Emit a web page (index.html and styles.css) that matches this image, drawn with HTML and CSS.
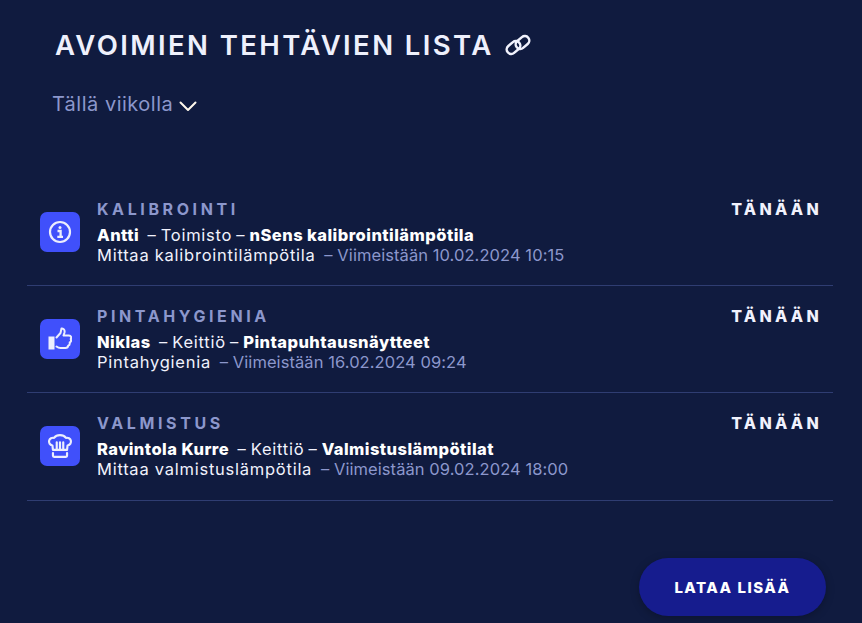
FILE: index.html
```html
<!DOCTYPE html>
<html lang="fi">
<head>
    <meta charset="UTF-8">
    <meta name="viewport" content="width=device-width, initial-scale=1.0">
    <title>Avoimien tehtävien lista</title>
    <link rel="stylesheet" href="styles.css">
</head>
<body>
    <h1 class="title">
        AVOIMIEN TEHTÄVIEN LISTA
        <svg class="link-icon" viewBox="0 0 28 22" width="28" height="22" fill="none" stroke="currentColor" stroke-width="2.5">
            <rect x="2" y="9" width="15" height="9" rx="4.5" transform="rotate(-40 9.500 13.500)"/>
            <rect x="11" y="4" width="15" height="9" rx="4.5" transform="rotate(-40 18.500 8.500)"/>
        </svg>
    </h1>

    <div class="filter">
        Tällä viikolla
        <svg class="chevron" viewBox="0 0 18 11" width="18" height="11" fill="none" stroke="currentColor" stroke-width="2" stroke-linecap="round" stroke-linejoin="round">
            <path d="M1.5 1.5 L9 9 L16.5 1.5"/>
        </svg>
    </div>

    <ul class="tasks">
        <li class="task">
            <div class="task-icon">
                <svg viewBox="0 0 24 24" width="24" height="24" fill="none" stroke="currentColor" stroke-width="2.2">
                    <circle cx="12" cy="12" r="10"/>
                    <circle cx="12" cy="7.6" r="1.5" fill="currentColor" stroke="none"/>
                    <path d="M9.5 11 H12.6 V16.4 M9.3 16.8 H15" stroke-width="2.3"/>
                </svg>
            </div>
            <div class="task-body">
                <div class="task-type">KALIBROINTI</div>
                <div class="task-line task-head"><b>Antti</b>&nbsp; – Toimisto – <b>nSens kalibrointilämpötila</b></div>
                <div class="task-line">Mittaa kalibrointilämpötila &nbsp;<span class="due">– Viimeistään 10.02.2024 10:15</span></div>
            </div>
            <div class="task-when">TÄNÄÄN</div>
        </li>
        <li class="task">
            <div class="task-icon">
                <svg viewBox="0 0 24 24" width="24" height="24" fill="none" stroke="currentColor" stroke-width="2" stroke-linejoin="round" stroke-linecap="round">
                    <rect x="0.500" y="9.500" width="6" height="13" fill="currentColor" stroke="none"/>
                    <path d="M8.500 10.500 L12.500 6 L13.500 1.500 C15.800 1 17 3.500 16.500 5.500 L15.500 8.500 H21 C23 8.500 23.700 10.500 22.700 12 C23.400 13.500 22.700 15 21.700 15.500 C22 17 21.200 18.300 20.200 18.700 C20 20.200 19 21 17.500 21 H12.500 C10.500 21 9.500 20.300 8.500 19.500"/>
                </svg>
            </div>
            <div class="task-body">
                <div class="task-type">PINTAHYGIENIA</div>
                <div class="task-line task-head"><b>Niklas</b>&nbsp; – Keittiö – <b>Pintapuhtausnäytteet</b></div>
                <div class="task-line">Pintahygienia &nbsp;<span class="due">– Viimeistään 16.02.2024 09:24</span></div>
            </div>
            <div class="task-when">TÄNÄÄN</div>
        </li>
        <li class="task">
            <div class="task-icon">
                <svg viewBox="0 0 24 24" width="26" height="26" fill="none" stroke="currentColor" stroke-width="2" stroke-linejoin="round" stroke-linecap="round">
                    <path d="M5.500 15.500 L5 11.500 C2.500 11 1.500 9 2 7 C2.500 5 4.500 4 6.500 4.500 C8 2.500 10 2 12 2 C14 2 16 2.500 17.500 4.500 C19.500 4 21.500 5 22 7 C22.500 9 21.500 11 19 11.500 L18.500 15.500 Z"/>
                    <path d="M9 8.500 V15 M12 8.500 V15 M15 8.500 V15"/>
                    <path d="M5.500 18.500 V21 C5.500 21.600 6 22 6.500 22 H17.500 C18 22 18.500 21.600 18.500 21 V18.500"/>
                </svg>
            </div>
            <div class="task-body">
                <div class="task-type">VALMISTUS</div>
                <div class="task-line task-head"><b>Ravintola Kurre</b>&nbsp; – Keittiö – <b>Valmistuslämpötilat</b></div>
                <div class="task-line">Mittaa valmistuslämpötila &nbsp;<span class="due">– Viimeistään 09.02.2024 18:00</span></div>
            </div>
            <div class="task-when">TÄNÄÄN</div>
        </li>
    </ul>

    <div class="actions">
        <button class="load-more">LATAA LISÄÄ</button>
    </div>
</body>
</html>
```

FILE: styles.css
```css
body {
    margin: 0;
    height: 623px;
    overflow: hidden;
    background-color: #101b3f;
    color: #f1f2fd;
    font-family: Inter, "Open Sans", sans-serif;
}
.title {
    display: flex;
    align-items: center;
    gap: 10px;
    margin: 0;
    padding: 28px 0 0 55px;
    font-size: 27.5px;
    line-height: 34px;
    font-weight: 600;
    letter-spacing: 2.4px;
    color: #eef0fc;
}
.link-icon {
    color: #f1f2fd;
}
.filter {
    display: flex;
    align-items: center;
    gap: 6px;
    padding: 29px 0 0 52px;
    font-size: 20px;
    line-height: 26px;
    letter-spacing: 0.5px;
    color: #8c97cc;
}
.chevron {
    margin-top: 5px;
    color: #fff8ec;
}
.tasks {
    list-style: none;
    margin: 62px 29px 0 27px;
    padding: 0;
}
.task {
    display: flex;
    height: 106px;
    border-bottom: 1px solid #2f3d72;
    padding-left: 13px;
    padding-right: 11px;
}
.task:last-child {
    height: 107px;
}
.task-icon {
    display: flex;
    align-items: center;
    justify-content: center;
    flex: none;
    width: 40px;
    height: 40px;
    margin-top: 33px;
    border-radius: 7px;
    background-color: #4050fb;
    color: #eceefd;
}
.task-body {
    flex: 1;
    padding: 20px 0 0 17px;
}
.task-type {
    font-size: 16px;
    line-height: 20px;
    font-weight: 700;
    letter-spacing: 3.6px;
    color: #8c97cc;
    margin-bottom: 6px;
}
.task-line {
    font-size: 16.5px;
    line-height: 20px;
    letter-spacing: 0.75px;
    color: #f1f2fd;
}
.task-head {
    word-spacing: -1.2px;
}
.task-line b {
    font-weight: 800;
    letter-spacing: 0.45px;
    word-spacing: 0;
    color: #fff;
}
.due {
    margin-left: -2px;
    letter-spacing: 0.07px;
    color: #8c97cc;
}
.task-when {
    padding-top: 20px;
    font-size: 16px;
    line-height: 20px;
    font-weight: 800;
    letter-spacing: 3.3px;
    color: #f1f2fd;
}
.actions {
    display: flex;
    justify-content: flex-end;
    padding: 57px 36px 0 0;
}
.load-more {
    width: 187px;
    height: 58px;
    border: none;
    border-radius: 29px;
    background-color: #161c8e;
    box-shadow: 0 2px 8px rgba(0, 0, 0, 0.25);
    color: #fff;
    font-family: Inter, "Open Sans", sans-serif;
    font-size: 15px;
    font-weight: 800;
    letter-spacing: 1.5px;
    cursor: pointer;
}
```
